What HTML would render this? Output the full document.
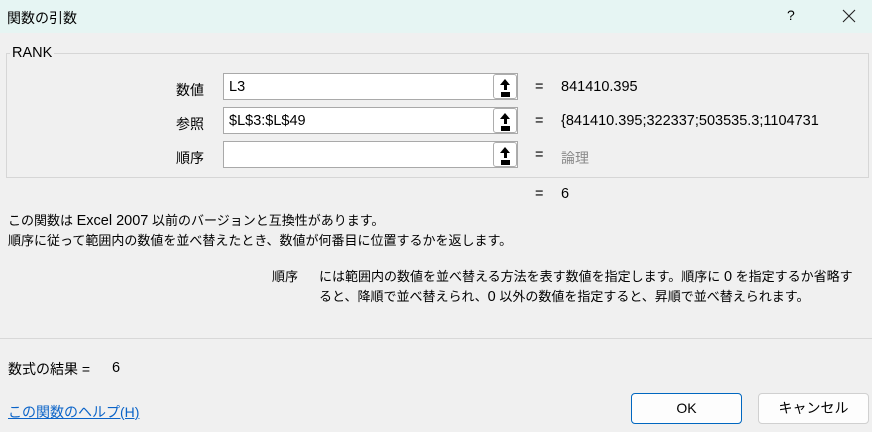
<!DOCTYPE html>
<html><head><meta charset="utf-8"><style>
body{margin:0;width:872px;height:432px;background:#f0f0f0;font-family:"Liberation Sans","Noto Sans CJK JP",sans-serif;font-size:13px;color:#000;position:relative;overflow:hidden}
.a{position:absolute;white-space:nowrap}
.n{font-size:14.5px}
.title{position:absolute;left:0;top:0;width:872px;height:33px;background:#e6f5f3}
.grp{position:absolute;left:6px;top:53px;width:861px;height:123px;border:1px solid #d6d6d6}
.inp{position:absolute;left:223px;width:295px;height:27px;background:#fff;border:1px solid #a9a9a9;box-sizing:border-box}
.inp span{position:absolute;left:5px;top:5px;font-size:14.5px}
.btn{position:absolute;right:0;top:0;width:24px;height:25px;border:1px solid #adadad;border-radius:3px;background:#fff;box-sizing:border-box}
.btn:before{content:"";position:absolute;left:6px;top:4px;border-left:5px solid transparent;border-right:5px solid transparent;border-bottom:6px solid #000}
.btn:after{content:"";position:absolute;left:9.5px;top:10px;width:3px;height:5px;background:#000;box-shadow:-3px 7px 0 0 #000,0 7px 0 #000,3px 7px 0 #000}
.pb{position:absolute;top:393px;height:31px;width:111px;background:#fdfdfd;border:1px solid #d0d0d0;border-radius:4px;box-sizing:border-box;text-align:center;line-height:29px;font-size:14px}
</style></head><body>
<div class="title"></div>
<div class="a" style="left:7px;top:8px;font-size:14px">関数の引数</div>
<div class="a" style="left:787px;top:7px;font-size:14px;font-weight:300">?</div>
<svg class="a" style="left:842px;top:9px" width="14" height="14"><path d="M1 1L13 13M13 1L1 13" stroke="#222" stroke-width="1.1"/></svg>
<div class="grp"></div>
<div class="a n" style="left:10px;top:45px;background:#f0f0f0;padding:0 2px">RANK</div>
<div class="a" style="left:176px;top:80px;font-size:14px">数値</div>
<div class="a" style="left:176px;top:114px;font-size:14px">参照</div>
<div class="a" style="left:176px;top:148px;font-size:14px">順序</div>
<div class="inp" style="top:73px"><span>L3</span><div class="btn"></div></div>
<div class="inp" style="top:107px"><span>$L$3:$L$49</span><div class="btn"></div></div>
<div class="inp" style="top:141px"><div class="btn"></div></div>
<div class="a n" style="left:535px;top:79px">=</div><div class="a n" style="left:561px;top:79px">841410.395</div>
<div class="a n" style="left:535px;top:113px">=</div><div class="a n" style="left:561px;top:113px">{841410.395;322337;503535.3;1104731</div>
<div class="a n" style="left:535px;top:147px">=</div><div class="a" style="left:561px;top:148px;color:#8a8a8a;font-size:14px">論理</div>
<div class="a n" style="left:535px;top:186px">=</div><div class="a n" style="left:561px;top:186px">6</div>
<div class="a" style="left:8px;top:210px">この関数は <span class="n">Excel 2007</span> 以前のバージョンと互換性があります。</div>
<div class="a" style="left:8px;top:230px">順序に従って範囲内の数値を並べ替えたとき、数値が何番目に位置するかを返します。</div>
<div class="a" style="left:272px;top:266px">順序</div>
<div class="a" style="left:319px;top:266px">には範囲内の数値を並べ替える方法を表す数値を指定します。順序に <span class="n">0</span> を指定するか省略す</div>
<div class="a" style="left:319px;top:286px">ると、降順で並べ替えられ、<span class="n">0</span> 以外の数値を指定すると、昇順で並べ替えられます。</div>
<div style="position:absolute;left:0;top:338px;width:872px;height:1px;background:#d8d8d8"></div>
<div class="a" style="left:8px;top:359px;font-size:14px">数式の結果 =</div><div class="a n" style="left:112px;top:360px">6</div>
<div class="a" style="left:8px;top:402px;color:#0a63c8;text-decoration:underline;font-size:14px">この関数のヘルプ(H)</div>
<div class="pb" style="left:631px;border-color:#0067c0">OK</div>
<div class="pb" style="left:758px">キャンセル</div>
</body></html>
